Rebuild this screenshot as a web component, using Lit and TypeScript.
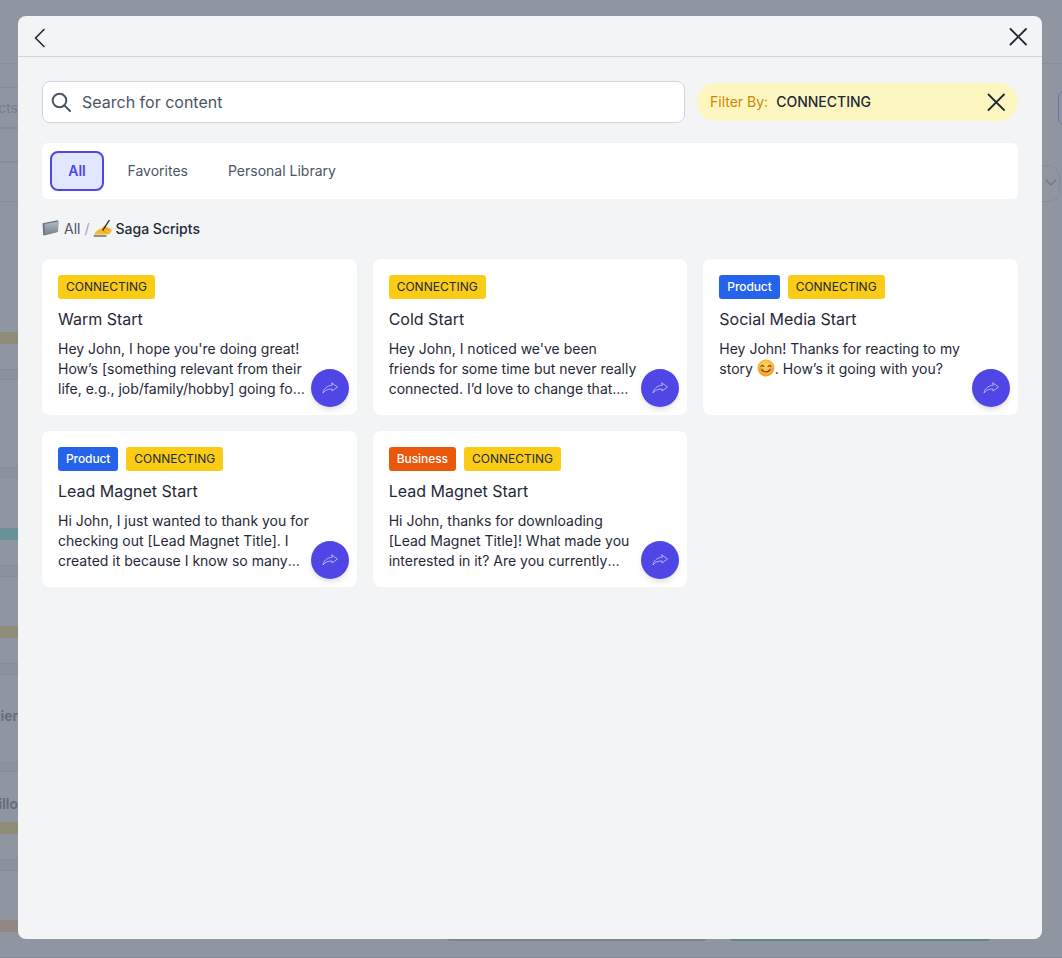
import { LitElement, html, css } from "lit";
import { customElement } from "lit/decorators.js";

const share = html`<svg viewBox="0 0 16 12" width="16" height="12" fill="none" stroke="#c9cbf6" stroke-width=".8" stroke-linejoin="round" stroke-linecap="round"><path d="M10 1 15.5 5 10 9V7C6 7 3 8 1 11 1.5 7 5 3.5 10 3.2Z"/></svg>`;

const folder = html`<svg class="emo" viewBox="0 0 18 18" width="18" height="18"><defs><linearGradient id="fg" x1="0" y1="0" x2="0" y2="1"><stop offset="0" stop-color="#aebbc7"/><stop offset="1" stop-color="#76838f"/></linearGradient></defs><path d="M.6 4.2 15.8 1.2 16.4 2 15.6 13 2.2 16.6 1.2 16.2Z" fill="#69747f"/><path d="M2.6 5 16.7 2.4 16 12.8 2.8 15.8Z" fill="url(#fg)"/></svg>`;

const writing = html`<svg class="emo" viewBox="0 0 20 18" width="20" height="18"><path d="M.8 17H13.5" stroke="#2a2a2a" stroke-width="1"/><path d="M1.5 15.8C1.5 12.5 5 10.5 8 9.4L11.5 6.4 18.6 10.4C19 12.6 17 15.6 13.5 15.6Z" fill="#f6bb33"/><path d="M9.6 11.6 16.4 1" stroke="#222" stroke-width="1.3"/><path d="M12 9.6 16 11.2M10.5 12.4 14.5 13.6" stroke="#d6951a" stroke-width=".8"/></svg>`;

const smile = html`<svg class="smile" viewBox="0 0 18 18" width="18" height="18"><defs><radialGradient id="sg" cx=".5" cy=".35" r=".7"><stop offset="0" stop-color="#ffd75e"/><stop offset="1" stop-color="#f39a1f"/></radialGradient></defs><circle cx="9" cy="9" r="8.5" fill="url(#sg)"/><path d="M4 7.5Q5.5 5.5 7 7.5M11 7.5Q12.5 5.5 14 7.5" stroke="#6b3d0c" stroke-width="1.1" fill="none" stroke-linecap="round"/><path d="M4.5 10.5Q9 15.5 13.5 10.5" stroke="#6b3d0c" stroke-width="1.2" fill="none" stroke-linecap="round"/><circle cx="3.8" cy="10" r="1.6" fill="#f6886a" opacity=".55"/><circle cx="14.2" cy="10" r="1.6" fill="#f6886a" opacity=".55"/></svg>`;

type Card = { tag?: [string, string]; title: string; body: unknown };
const cards: Card[] = [
  { title: "Warm Start", body: "Hey John, I hope you're doing great! How’s [something relevant from their life, e.g., job/family/hobby] going for you these days? I’d love to hear more." },
  { title: "Cold Start", body: "Hey John, I noticed we've been friends for some time but never really connected. I’d love to change that. How has your week been going so far?" },
  { tag: ["Product", "blue"], title: "Social Media Start", body: html`Hey John! Thanks for reacting to my story ${smile}. How’s it going with you?` },
  { tag: ["Product", "blue"], title: "Lead Magnet Start", body: "Hi John, I just wanted to thank you for checking out [Lead Magnet Title]. I created it because I know so many people struggle with this every single day." },
  { tag: ["Business", "orange"], title: "Lead Magnet Start", body: "Hi John, thanks for downloading [Lead Magnet Title]! What made you interested in it? Are you currently working on something related to this topic?" },
];

const bands: [number, number][] = [[87, 41], [128, 34], [162, 40], [369, 11], [467, 11], [565, 12], [663, 12], [762, 10], [859, 12]];
const bars: [number, string][] = [[332, "#8f8d78"], [528, "#6a9098"], [626, "#8f8d78"], [822, "#8f8d78"], [920, "#948682"]];
const ghosts: [number, string, string][] = [[99, "cts", "thin"], [707, "tier", ""], [795, "illo", ""]];

@customElement("app-root")
export class AppRoot extends LitElement {
  static styles = css`
    :host { display: block; width: 1062px; height: 958px; position: relative; overflow: hidden; background: #8f96a1; font-family: Inter, "Liberation Sans", sans-serif; }
    .backdrop { position: absolute; inset: 0; }
    .topline { position: absolute; left: 0; right: 0; top: 63px; height: 1px; background: #878e99; }
    .botline { position: absolute; left: 0; right: 0; top: 957px; height: 1px; background: #838a95; }
    .band { position: absolute; left: 0; width: 18px; box-sizing: border-box; border-top: 1px solid #868c98; border-bottom: 1px solid #868c98; }
    .band.tall { background: none; }
    .band.thin { background: #8b919d; }
    .bar { position: absolute; left: 0; width: 18px; height: 12px; }
    .ghost { position: absolute; left: 0; width: 18px; overflow: hidden; display: flex; justify-content: flex-end; font-size: 14px; font-weight: 600; color: #666c78; white-space: nowrap; line-height: 18px; }
    .ghost span { flex: none; }
    .ghost.thin { font-weight: 400; color: #787e89; }
    .ghostpill { position: absolute; left: 1058px; top: 90px; width: 20px; height: 36px; border: 1.5px solid #6f72a6; border-radius: 8px; box-sizing: border-box; }
    .ghostsel { position: absolute; left: 1000px; top: 165px; width: 60px; height: 37px; border: 1px solid #868d98; border-radius: 12px; box-sizing: border-box; }
    .chev { position: absolute; left: 1045px; top: 179px; }
    .ghostbtn { position: absolute; top: 930px; height: 11px; width: 260px; border-radius: 0 0 4px 4px; }
    .ghostbtn.grey { left: 447px; background: #7f8692; }
    .ghostbtn.green { left: 730px; background: #5f8a80; }
    .modal { position: absolute; left: 18px; top: 16px; width: 1024px; height: 923px; background: #f3f4f6; border-radius: 8px; display: flex; flex-direction: column; overflow: hidden; }
    .head { height: 30px; flex: none; border-bottom: 1px solid #d1d5db; display: flex; align-items: flex-start; justify-content: space-between; padding: 10px 14px 0 12px; }
    .head svg, .pill svg { display: block; }
    .content { padding: 24px; display: flex; flex-direction: column; }
    .top { display: flex; gap: 12px; align-items: flex-start; height: 42px; }
    .search { flex: 1; height: 42px; box-sizing: border-box; background: #fff; border: 1px solid #d1d5db; border-radius: 8px; display: flex; align-items: center; gap: 11px; padding: 0 0 1px 8px; font-size: 16px; color: #4b5563; }
    .search svg { display: block; }
    .pill { margin-top: 2px; width: 321px; height: 38px; box-sizing: border-box; background: #fef6c0; border-radius: 19px; display: flex; align-items: center; padding: 0 12px 0 13px; font-size: 14px; }
    .pill span { padding-bottom: 2px; }
    .pill .lab { color: #ca8a04; margin-right: 8px; }
    .pill .val { color: #1f2937; font-weight: 500; flex: 1; }
    .tabs { margin-top: 20px; height: 56px; box-sizing: border-box; background: #fff; border-radius: 6px; display: flex; align-items: center; padding: 0 8px; gap: 24px; font-size: 14px; color: #4b5563; }
    .tab { height: 40px; padding: 0 8px 2px; box-sizing: border-box; display: flex; align-items: center; }
    .tab.on { width: 54px; justify-content: center; background: #e0e7ff; border: 2px solid #4f46e5; border-radius: 8px; color: #4f46e5; font-weight: 600; }
    .tab.on + .tab { margin-left: -8.5px; }
    .crumbs { margin-top: 20px; height: 20px; display: flex; align-items: center; font-size: 14px; color: #4b5563; }
    .crumbs span { padding-bottom: 2px; }
    .emo { display: block; flex: none; margin-bottom: 2px; }
    .all { margin-left: 4px; }
    .sep { margin: 0 3px 0 4px; color: #9ca3af; }
    .cur { color: #1f2937; font-weight: 500; margin-left: 3px; }
    .grid { margin-top: 20px; display: grid; grid-template-columns: repeat(3, 1fr); gap: 16px; }
    .card { position: relative; height: 156px; box-sizing: border-box; background: #fff; border-radius: 8px; padding: 16px; color: #1f2937; }
    .tags { display: flex; gap: 8px; height: 24px; }
    .tag { height: 24px; padding: 0 8px; border-radius: 3px; font-size: 12px; line-height: 24px; font-weight: 400; }
    .yellow { background: #facc15; color: #1f2937; }
    .blue { background: #2563eb; color: #fff; font-weight: 500; letter-spacing: -0.1px; }
    .orange { background: #ea580c; color: #fff; font-weight: 500; letter-spacing: -0.06px; }
    .title { font-size: 16px; line-height: 24px; margin-top: 8px; font-weight: 400; }
    .body { margin-top: 8px; padding-right: 32px; font-size: 14px; line-height: 20px; display: -webkit-box; -webkit-box-orient: vertical; -webkit-line-clamp: 3; overflow: hidden; }
    .smile { vertical-align: -3px; }
    .fab { position: absolute; right: 8px; bottom: 8px; width: 38px; height: 38px; border-radius: 50%; background: #4f46e5; display: flex; align-items: center; justify-content: center; box-shadow: 0 4px 6px -1px rgba(0,0,0,.1), 0 2px 4px -2px rgba(0,0,0,.1); }
  `;

  render() {
    return html`
      <div class="backdrop">
        <div class="topline"></div>
        <div class="botline"></div>
        ${bands.map(([y, h]) => html`<div class="band ${h > 20 ? "tall" : "thin"}" style="top:${y}px;height:${h}px"></div>`)}
        ${bars.map(([y, c]) => html`<div class="bar" style="top:${y}px;background:${c}"></div>`)}
        ${ghosts.map(([y, t, k]) => html`<div class="ghost ${k}" style="top:${y}px"><span>${t}</span></div>`)}
        <div class="ghostpill"></div>
        <div class="ghostsel"></div>
        <svg class="chev" width="12" height="8" viewBox="0 0 12 8" fill="none" stroke="#6f7682" stroke-width="1.2"><path d="M1 1 6 6 11 1"/></svg>
        <div class="ghostbtn grey"></div>
        <div class="ghostbtn green"></div>
      </div>
      <div class="modal">
        <div class="head">
          <svg width="20" height="24" viewBox="0 0 20 24" fill="none" stroke="#1f2937" stroke-width="1.6" stroke-linecap="round" stroke-linejoin="round"><path d="M14 3.5 5.5 12 14 20.5"/></svg>
          <svg width="20" height="20" viewBox="0 0 20 20" fill="none" stroke="#1f2937" stroke-width="1.8" stroke-linecap="round"><path d="M2.5 3 18 18.5M18 3 2.5 18.5"/></svg>
        </div>
        <div class="content">
          <div class="top">
            <div class="search">
              <svg width="20" height="20" viewBox="0 0 20 20" fill="none" stroke="#4b5563" stroke-width="2" stroke-linecap="round"><circle cx="8.5" cy="8.5" r="6.8"/><path d="M13.4 13.4 19 19"/></svg>
              <span>Search for content</span>
            </div>
            <div class="pill">
              <span class="lab">Filter By:</span><span class="val">CONNECTING</span>
              <svg width="20" height="20" viewBox="0 0 20 20" fill="none" stroke="#1f2937" stroke-width="1.8" stroke-linecap="round"><path d="M2.5 2.5 18 18M18 2.5 2.5 18"/></svg>
            </div>
          </div>
          <div class="tabs">
            <div class="tab on">All</div><div class="tab">Favorites</div><div class="tab">Personal Library</div>
          </div>
          <div class="crumbs">${folder}<span class="all">All</span><span class="sep">/</span>${writing}<span class="cur">Saga Scripts</span></div>
          <div class="grid">
            ${cards.map((c) => html`
              <div class="card">
                <div class="tags">
                  ${c.tag ? html`<span class="tag ${c.tag[1]}">${c.tag[0]}</span>` : ""}
                  <span class="tag yellow">CONNECTING</span>
                </div>
                <div class="title">${c.title}</div>
                <div class="body">${c.body}</div>
                <div class="fab">${share}</div>
              </div>`)}
          </div>
        </div>
      </div>
    `;
  }
}
